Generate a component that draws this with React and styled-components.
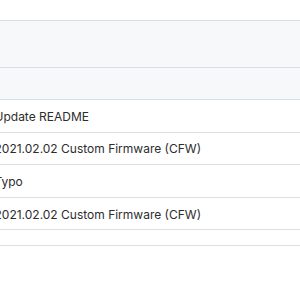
import React from "react";
import styled, { createGlobalStyle } from "styled-components";

const GlobalStyle = createGlobalStyle`
  body {
    margin: 0;
    background: #fff;
    font-family: Inter, "Liberation Sans", Arial, sans-serif;
  }
`;

const commits = [
  "Update README",
  "2021.02.02 Custom Firmware (CFW)",
  "Typo",
  "2021.02.02 Custom Firmware (CFW)",
  "",
];

export default function App() {
  return (
    <>
      <GlobalStyle />
      <Page>
        <Table>
          <HeaderBar />
          <SubBar />
          {commits.map((msg, i) => (
            <Row key={i} $empty={!msg}>
              <Message>{msg}</Message>
            </Row>
          ))}
        </Table>
      </Page>
    </>
  );
}

const Page = styled.div`
  width: 300px;
  height: 300px;
  overflow: hidden;
  padding-top: 20px;
  box-sizing: border-box;
`;

const Table = styled.div`
  display: flex;
  flex-direction: column;
  margin-left: -5.5px;
  border-top: 1px solid #d8dee4;
`;

const HeaderBar = styled.div`
  height: 46px;
  background: #f6f8fa;
  border-bottom: 1px solid #d8dee4;
`;

const SubBar = styled.div`
  height: 31px;
  background: #f6f8fa;
  border-bottom: 1px solid #d8dee4;
`;

const Row = styled.div`
  display: flex;
  align-items: center;
  flex-shrink: 0;
  box-sizing: border-box;
  height: ${(p) => (p.$empty ? "16px" : "32.6px")};
  padding-top: 2px;
  border-bottom: 1px solid #d8dee4;
  background: #fff;
`;

const Message = styled.span`
  font-size: 12px;
  line-height: 16px;
  color: #2d2d2d;
  white-space: nowrap;
`;
